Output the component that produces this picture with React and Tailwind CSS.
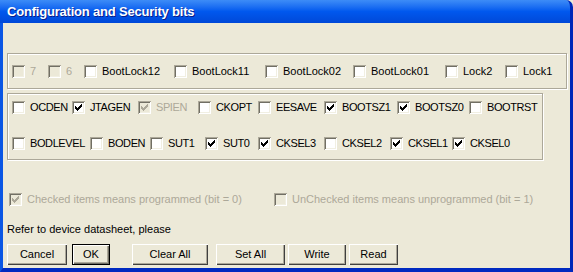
import React from "react";

const font = { fontFamily: '"Liberation Sans", Arial, sans-serif' };

const row1 = [
  { label: "7", w: "w-[36px]", disabled: true },
  { label: "6", w: "w-[36px]", disabled: true },
  { label: "BootLock12", w: "w-[90px]" },
  { label: "BootLock11", w: "w-[91px]" },
  { label: "BootLock02", w: "w-[88px]" },
  { label: "BootLock01", w: "w-[92px]" },
  { label: "Lock2", w: "w-[60px]" },
  { label: "Lock1", w: "" },
];

const row2 = [
  { label: "OCDEN", w: "w-[60px]" },
  { label: "JTAGEN", w: "w-[66px]", checked: true },
  { label: "SPIEN", w: "w-[60px]", checked: true, disabled: true },
  { label: "CKOPT", w: "w-[60px]" },
  { label: "EESAVE", w: "w-[66px]" },
  { label: "BOOTSZ1", w: "w-[73px]", checked: true },
  { label: "BOOTSZ0", w: "w-[72px]", checked: true },
  { label: "BOOTRST", w: "" },
];

const row3 = [
  { label: "BODLEVEL", w: "w-[78px]" },
  { label: "BODEN", w: "w-[60px]" },
  { label: "SUT1", w: "w-[55px]" },
  { label: "SUT0", w: "w-[53px]", checked: true },
  { label: "CKSEL3", w: "w-[66px]", checked: true },
  { label: "CKSEL2", w: "w-[66px]" },
  { label: "CKSEL1", w: "w-[62px]", checked: true },
  { label: "CKSEL0", w: "", checked: true },
];

function Box({ checked, disabled }) {
  return (
    <div
      className={`relative w-[13px] h-[13px] shrink-0 shadow-[inset_1px_1px_0_#aca899,inset_-1px_-1px_0_#ffffff,inset_2px_2px_0_#716f64,inset_-2px_-2px_0_#f1efe2] ${
        disabled ? "bg-[#ece9d8]" : "bg-white"
      }`}
    >
      {checked && (
        <svg
          className="absolute inset-0"
          width="13"
          height="13"
          viewBox="0 0 13 13"
          shapeRendering="crispEdges"
          fill={disabled ? "#aca899" : "#000"}
        >
          <rect x="3" y="5" width="1" height="3" />
          <rect x="4" y="6" width="1" height="3" />
          <rect x="5" y="7" width="1" height="3" />
          <rect x="6" y="6" width="1" height="3" />
          <rect x="7" y="5" width="1" height="3" />
          <rect x="8" y="4" width="1" height="3" />
          <rect x="9" y="3" width="1" height="3" />
        </svg>
      )}
    </div>
  );
}

function Check({ label, w, checked, disabled, tight }) {
  return (
    <div className={`flex items-center gap-[5px] shrink-0 ${w}`}>
      <Box checked={checked} disabled={disabled} />
      <span
        className={`text-[11px] leading-[13px] whitespace-nowrap ${tight ? "tracking-[-0.4px]" : ""} ${
          disabled ? "text-[#aca899]" : "text-black"
        }`}
      >
        {label}
      </span>
    </div>
  );
}

function Button({ children, w, ml, isDefault }) {
  return (
    <div
      className={`${w} ${ml} h-[21px] flex items-center justify-center text-[11px] text-black bg-[#ece9d8] shrink-0 ${
        isDefault
          ? "border border-black shadow-[inset_1px_1px_0_#ffffff,inset_-1px_-1px_0_#716f64,inset_-2px_-2px_0_#aca899]"
          : "shadow-[inset_1px_1px_0_#ffffff,inset_-1px_-1px_0_#404040,inset_-2px_-2px_0_#aca899]"
      }`}
    >
      {children}
    </div>
  );
}

export default function App() {
  return (
    <div className="w-[573px] h-[272px] flex flex-col bg-[#ece9d8] overflow-hidden" style={font}>
      {/* Title bar */}
      <div className="h-[23px] shrink-0 flex items-center pl-[7px] rounded-tr-[7px] bg-gradient-to-b from-[#3d8cf7] via-[#0058ee] to-[#0048d8] border-r-[3px] border-r-[#0026b8]">
        <span className="text-white font-bold text-[13px] [text-shadow:1px_1px_0_#0a1e8a] tracking-[-0.2px]">
          Configuration and Security bits
        </span>
      </div>

      {/* Window body */}
      <div className="flex-1 flex flex-col border-l-[3px] border-l-[#0a56e4] border-r-[3px] border-r-[#0026b8] border-b-[4px] border-b-[#002ac0]">
        {/* Lock bits group */}
        <div className="mt-[30px] ml-[4px] w-[560px] h-[36px] border border-[#aca899] shadow-[inset_1px_1px_0_#ffffff,1px_1px_0_#ffffff] flex items-center pl-[4px]">
          {row1.map((c) => (
            <Check key={c.label} {...c} />
          ))}
        </div>

        {/* Fuse bits group */}
        <div className="mt-[4px] ml-[4px] w-[536px] h-[67px] border border-[#aca899] shadow-[inset_1px_1px_0_#ffffff,1px_1px_0_#ffffff] flex flex-col pl-[4px] pt-[7px] gap-[23px]">
          <div className="flex items-center">
            {row2.map((c) => (
              <Check key={c.label} {...c} tight />
            ))}
          </div>
          <div className="flex items-center">
            {row3.map((c) => (
              <Check key={c.label} {...c} tight />
            ))}
          </div>
        </div>

        {/* Legend */}
        <div className="mt-[33px] flex items-center pl-[6px]">
          <div className="w-[265px] flex">
            <Check label="Checked items means programmed (bit = 0)" w="" checked disabled />
          </div>
          <Check label="UnChecked items means unprogrammed (bit = 1)" w="" disabled />
        </div>

        <div className="mt-[17px] pl-[4px] text-[11px] leading-[13px] text-black">
          Refer to device datasheet, please
        </div>

        {/* Buttons */}
        <div className="mt-[8px] flex">
          <Button w="w-[60px]" ml="ml-[4px]">Cancel</Button>
          <Button w="w-[38px]" ml="ml-[5px]" isDefault>OK</Button>
          <Button w="w-[76px]" ml="ml-[22px]">Clear All</Button>
          <Button w="w-[69px]" ml="ml-[8px]">Set All</Button>
          <Button w="w-[58px]" ml="ml-[3px]">Write</Button>
          <Button w="w-[49px]" ml="ml-[3px]">Read</Button>
        </div>
      </div>
    </div>
  );
}
